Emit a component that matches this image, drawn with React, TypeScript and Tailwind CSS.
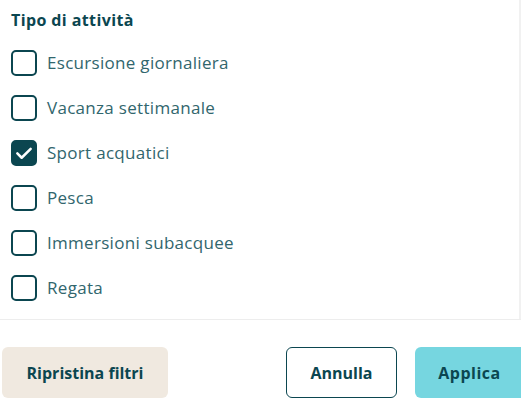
import React from "react";

interface OptionProps {
  label: string;
  checked?: boolean;
}

const Option: React.FC<OptionProps> = ({ label, checked }) => {
  return (
    <label className="flex items-center h-[45px] gap-[10px] cursor-pointer">
      <span
        className={
          checked
            ? "flex items-center justify-center w-[26px] h-[26px] rounded-[5px] border-2 border-[#0b4650] bg-[#0b4650]"
            : "flex items-center justify-center w-[26px] h-[26px] rounded-[5px] border-2 border-[#0b4650] bg-white"
        }
      >
        {checked && (
          <svg width="20" height="20" viewBox="0 0 24 24" fill="none">
            <path d="M4 12.5l5.2 5.2L20 7" stroke="white" strokeWidth="3" strokeLinecap="round" strokeLinejoin="round" />
          </svg>
        )}
      </span>
      <span className="text-[17px] text-[#31666d] tracking-[0.3px]">{label}</span>
    </label>
  );
};

const options = [
  { label: "Escursione giornaliera" },
  { label: "Vacanza settimanale" },
  { label: "Sport acquatici", checked: true },
  { label: "Pesca" },
  { label: "Immersioni subacquee" },
  { label: "Regata" }
];

export default function App() {
  return (
    <div className="w-[521px] h-[412px] bg-white font-['Open_Sans',sans-serif] overflow-hidden">
      <div className="flex h-[320px] border-b border-[#ededed]">
        <div className="flex-1 pl-[11px] pt-[9px]">
          <h3 className="text-[16px] font-bold text-[#0b4650] leading-[22px] mb-[9px] tracking-[0.4px]">Tipo di attività</h3>
          <div className="flex flex-col">
            {options.map((o) => (
              <Option key={o.label} label={o.label} checked={o.checked} />
            ))}
          </div>
        </div>
        <div className="w-[2px] bg-[#f1f1f1]" />
      </div>
      <div className="flex items-center pl-[2px] pt-[27px]">
        <button className="w-[166px] h-[51px] rounded-[6px] bg-[#f0e9e0] text-[16px] font-bold text-[#0b4650]">
          Ripristina filtri
        </button>
        <div className="flex-1" />
        <button className="w-[111px] h-[51px] rounded-[6px] border-[1.5px] border-[#0b4650] bg-white text-[16px] font-bold text-[#0b4650]">
          Annulla
        </button>
        <button className="ml-[18px] w-[106px] h-[51px] rounded-l-[6px] bg-[#76d6e0] text-[16px] font-bold text-[#0b4650] tracking-[0.5px] pl-[3px]">
          Applica
        </button>
      </div>
    </div>
  );
}
